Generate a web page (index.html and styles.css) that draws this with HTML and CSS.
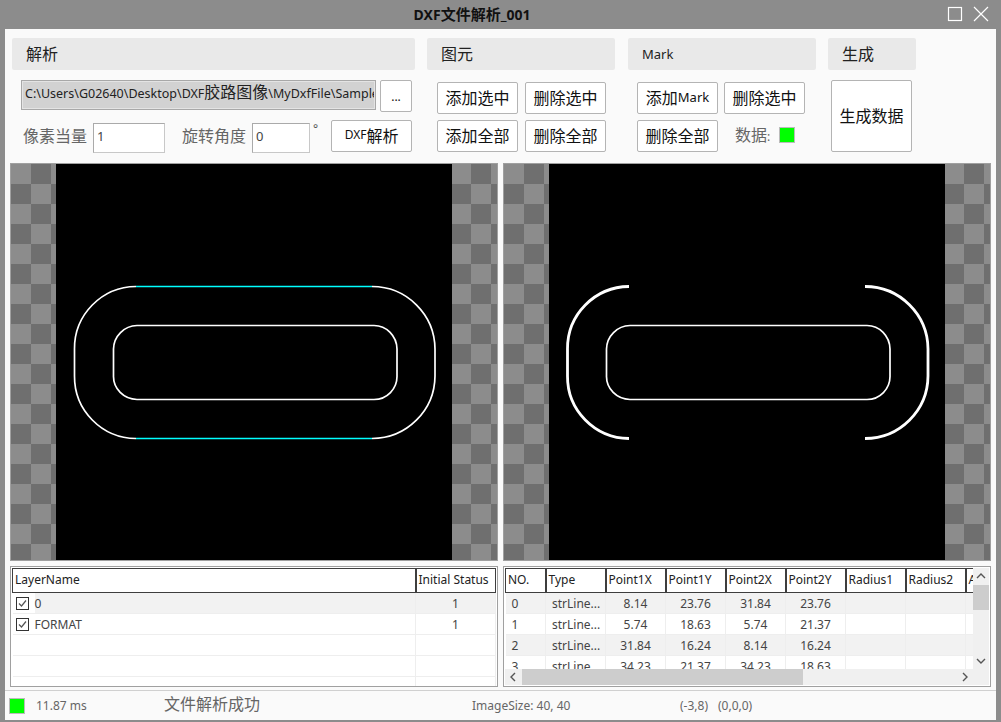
FILE: index.html
```html
<!DOCTYPE html>
<html lang="en">
<head>
    <meta charset="UTF-8">
    <title>DXF文件解析_001</title>
    <link rel="stylesheet" href="styles.css">
</head>
<body>
    <div class="window">
        <div class="titlebar">
            <span class="title">DXF<span class="title-cjk">文件解析</span>_001</span>
            <div class="controls">
                <svg width="16" height="16" viewBox="0 0 16 16"><rect x="1.5" y="1.5" width="13" height="13" class="ctl"/></svg>
                <svg width="16" height="16" viewBox="0 0 16 16"><path d="M1 1L15 15M15 1L1 15" class="ctl"/></svg>
            </div>
        </div>

        <div class="client">
            <div class="toolbar">
                <section class="group group-parse">
                    <h3><span class="cjk">解析</span></h3>
                    <div class="path-row">
                        <div class="path-field"><div class="path-text">C:\Users\G02640\Desktop\DXF<span class="cjk">胶路图像</span>\MyDxfFile\Sample</div></div>
                        <button class="btn btn-dots">...</button>
                    </div>
                    <div class="param-row">
                        <label class="label"><span class="cjk">像素当量</span></label>
                        <div class="input input-scale">1</div>
                        <label class="label label-angle"><span class="cjk">旋转角度</span></label>
                        <div class="input input-angle">0</div>
                        <span class="degree">°</span>
                        <button class="btn btn-parse">DXF<span class="cjk">解析</span></button>
                    </div>
                </section>

                <section class="group group-element">
                    <h3><span class="cjk">图元</span></h3>
                    <div class="btn-grid">
                        <button class="btn"><span class="cjk">添加选中</span></button>
                        <button class="btn"><span class="cjk">删除选中</span></button>
                        <button class="btn"><span class="cjk">添加全部</span></button>
                        <button class="btn"><span class="cjk">删除全部</span></button>
                    </div>
                </section>

                <section class="group group-mark">
                    <h3>Mark</h3>
                    <div class="btn-grid">
                        <button class="btn btn-mark"><span class="cjk">添加</span>Mark</button>
                        <button class="btn"><span class="cjk">删除选中</span></button>
                        <button class="btn"><span class="cjk">删除全部</span></button>
                        <div class="data-flag">
                            <span class="label"><span class="cjk">数据</span>:</span>
                            <span class="swatch"></span>
                        </div>
                    </div>
                </section>

                <section class="group group-make">
                    <h3><span class="cjk">生成</span></h3>
                    <button class="btn btn-make"><span class="cjk">生成数据</span></button>
                </section>
            </div>

            <div class="views">
                <div class="view">
                    <svg class="drawing" width="396" height="396" viewBox="0 0 396 396">
                        <path class="line" d="M80 122.500A62 62 0 0 0 18.500 185V212A62 62 0 0 0 80 274.500"/>
                        <path class="line" d="M316 122.500A63 63 0 0 1 379 185V212A63 63 0 0 1 316 274.500"/>
                        <path class="line" d="M81 161.500H318A23 24 0 0 1 341 185V212A23 23 0 0 1 318 235.500H81A24 23 0 0 1 57.500 212V185A24 24 0 0 1 81 161.500Z"/>
                        <path class="sel" d="M80 122.500H316M80 274.500H316"/>
                    </svg>
                </div>
                <div class="view">
                    <svg class="drawing" width="396" height="396" viewBox="0 0 396 396">
                        <path class="thick" d="M80 122.500A62 62 0 0 0 18.500 185V212A62 62 0 0 0 80 274.500"/>
                        <path class="thick" d="M316 122.500A63 63 0 0 1 379 185V212A63 63 0 0 1 316 274.500"/>
                        <path class="line" d="M81 161.500H318A23 24 0 0 1 341 185V212A23 23 0 0 1 318 235.500H81A24 23 0 0 1 57.500 212V185A24 24 0 0 1 81 161.500Z"/>
                    </svg>
                </div>
            </div>

            <div class="tables">
                <div class="frame">
                    <table class="grid layers">
                        <thead>
                            <tr><th class="col-name">LayerName</th><th class="col-init">Initial Status</th></tr>
                        </thead>
                        <tbody>
                            <tr>
                                <td>
                                    <div class="layer-cell">
                                        <span class="check-wrap">
                                            <svg width="13" height="13" viewBox="0 0 13 13"><rect x="0.500" y="0.500" width="12" height="12" class="box"/><path d="M3 6.500L5.500 9L10 3.500" class="tick"/></svg>
                                        </span>0
                                    </div>
                                </td>
                                <td>1</td>
                            </tr>
                            <tr>
                                <td>
                                    <div class="layer-cell">
                                        <span class="check-wrap">
                                            <svg width="13" height="13" viewBox="0 0 13 13"><rect x="0.500" y="0.500" width="12" height="12" class="box"/><path d="M3 6.500L5.500 9L10 3.500" class="tick"/></svg>
                                        </span>FORMAT
                                    </div>
                                </td>
                                <td>1</td>
                            </tr>
                            <tr><td></td><td></td></tr>
                            <tr><td></td><td></td></tr>
                            <tr><td></td><td></td></tr>
                        </tbody>
                    </table>
                </div>

                <div class="frame frame-scroll">
                    <div class="scroll-view">
                        <table class="grid entities">
                            <thead>
                                <tr>
                                    <th class="col-no">NO.</th><th>Type</th><th>Point1X</th><th>Point1Y</th><th>Point2X</th><th>Point2Y</th><th>Radius1</th><th>Radius2</th><th>Angle</th>
                                </tr>
                            </thead>
                            <tbody>
                                <tr><td class="no">0</td><td class="type">strLine...</td><td>8.14</td><td>23.76</td><td>31.84</td><td>23.76</td><td></td><td></td><td></td></tr>
                                <tr><td class="no">1</td><td class="type">strLine...</td><td>5.74</td><td>18.63</td><td>5.74</td><td>21.37</td><td></td><td></td><td></td></tr>
                                <tr><td class="no">2</td><td class="type">strLine...</td><td>31.84</td><td>16.24</td><td>8.14</td><td>16.24</td><td></td><td></td><td></td></tr>
                                <tr><td class="no">3</td><td class="type">strLine...</td><td>34.23</td><td>21.37</td><td>34.23</td><td>18.63</td><td></td><td></td><td></td></tr>
                            </tbody>
                        </table>
                    </div>
                    <div class="vbar">
                        <svg width="16" height="16" viewBox="0 0 16 16"><path d="M4 10L8 6L12 10" class="arrow"/></svg>
                        <div class="vtrack"><div class="vthumb"></div></div>
                        <svg width="16" height="16" viewBox="0 0 16 16"><path d="M4 6L8 10L12 6" class="arrow"/></svg>
                    </div>
                    <div class="hbar">
                        <svg width="16" height="16" viewBox="0 0 16 16"><path d="M10 4L6 8L10 12" class="arrow"/></svg>
                        <div class="htrack"><div class="hthumb"></div></div>
                        <svg width="16" height="16" viewBox="0 0 16 16"><path d="M6 4L10 8L6 12" class="arrow"/></svg>
                    </div>
                    <div class="corner"></div>
                </div>
            </div>

            <div class="statusbar">
                <span class="swatch swatch-status"></span>
                <span class="time">11.87 ms</span>
                <span class="message"><span class="cjk">文件解析成功</span></span>
                <span class="size">ImageSize: 40, 40</span>
                <span class="pos">(-3,8)</span>
                <span class="rgb">(0,0,0)</span>
            </div>
        </div>
    </div>
</body>
</html>
```

FILE: styles.css
```css
* {
    box-sizing: border-box;
}
html, body {
    margin: 0;
    padding: 0;
}
body {
    width: 1001px;
    height: 722px;
    overflow: hidden;
    background-color: #8c8c8c;
    font-family: "Noto Sans", "Noto Sans CJK SC", sans-serif;
    font-size: 12px;
    color: #333;
}
.cjk {
    font-family: "Noto Sans CJK SC", sans-serif;
    font-size: 16px;
}
.window {
    width: 1001px;
    height: 722px;
    display: flex;
    flex-direction: column;
    padding: 0 5px 5px;
}

/* title bar */
.titlebar {
    height: 29px;
    flex: none;
    position: relative;
    display: flex;
    align-items: center;
    justify-content: center;
    padding: 0 57px 2px 0;
}
.title {
    font-size: 14px;
    font-weight: bold;
    color: #111;
}
.title-cjk {
    font-family: "Noto Sans CJK SC", sans-serif;
    font-size: 15px;
}
.controls {
    position: absolute;
    right: 7px;
    top: 6px;
    display: flex;
    gap: 10px;
}
.ctl {
    fill: none;
    stroke: #fff;
    stroke-width: 1.2;
}

.client {
    flex: 1;
    display: flex;
    flex-direction: column;
    background-color: #fafafa;
}

/* top tool groups */
.toolbar {
    height: 134px;
    flex: none;
    display: flex;
    padding: 9px 0 0 7px;
}
.group h3 {
    height: 32px;
    margin: 0;
    padding: 0 0 3px 14px;
    display: flex;
    align-items: center;
    background-color: #e9e9e9;
    border-radius: 2px;
    font-weight: normal;
    font-size: 13px;
    color: #222;
}
.group-mark h3 {
    padding-bottom: 0;
}
.group-parse {
    width: 403px;
    margin-right: 12px;
}
.group-element {
    width: 188px;
    margin-right: 13px;
}
.group-mark {
    width: 188px;
    margin-right: 12px;
}
.group-make {
    width: 88px;
}
.btn {
    width: 81px;
    height: 32px;
    padding: 0 0 3px;
    background-color: #fff;
    border: 1px solid #b4b4b4;
    border-radius: 2px;
    font-family: inherit;
    font-size: 12px;
    color: #111;
    display: inline-flex;
    align-items: center;
    justify-content: center;
}
.btn-mark {
    font-size: 13px;
    padding-bottom: 2px;
}
.btn-grid {
    display: grid;
    grid-template-columns: 81px 81px;
    grid-auto-rows: 32px;
    column-gap: 7px;
    row-gap: 6px;
    padding: 12px 0 0 10px;
}
.group-mark .btn-grid {
    column-gap: 6px;
    padding-left: 9px;
}
.btn-make {
    height: 72px;
    margin: 10px 0 0 3px;
}
.path-row {
    display: flex;
    gap: 4px;
    padding: 10px 0 0 9px;
}
.path-field {
    width: 355px;
    height: 30px;
    padding: 0 1px 0 3px;
    background-color: #d2d2d2;
    background-clip: padding-box;
    border: 1px solid #a8a8a8;
    outline: 1px solid #e4e4e4;
    outline-offset: -2px;
    font-size: 12.5px;
    line-height: 20px;
    color: #222;
}
.path-text {
    white-space: nowrap;
    overflow: hidden;
}
.btn-dots {
    width: 32px;
    margin: 0;
    padding: 0;
}
.param-row {
    display: flex;
    align-items: flex-start;
    padding: 8px 0 0 11px;
}
.label {
    color: #666;
    line-height: 30px;
}
.input {
    height: 30px;
    margin-top: 3px;
    padding-left: 3px;
    background-color: #fff;
    border: 1px solid #c8c8c8;
    border-top-color: #aaa;
    border-left-color: #aaa;
    font-size: 13px;
    line-height: 24px;
    color: #444;
}
.input-scale {
    width: 72px;
    margin-left: 6px;
}
.label-angle {
    margin-left: 17px;
}
.input-angle {
    width: 58px;
    margin-left: 6px;
}
.degree {
    width: 21px;
    padding-left: 3px;
    line-height: 18px;
    color: #555;
}
.data-flag {
    display: flex;
    align-items: center;
    padding: 0 0 2px 11px;
}
.data-flag .label {
    width: 44px;
    white-space: nowrap;
}
.swatch {
    display: block;
    width: 16px;
    height: 16px;
    background-color: #00ff00;
    border: 1px solid #bbb;
    flex: none;
}

/* drawing views */
.views {
    display: flex;
    gap: 5px;
    padding: 0 5px;
}
.view {
    width: 488px;
    height: 398px;
    border: 1px solid #a0a0a0;
    display: flex;
    justify-content: center;
    background-color: #8c8c8c;
    background-image: conic-gradient(#6f6f6f 25%, #8c8c8c 0 50%, #6f6f6f 0 75%, #8c8c8c 0);
    background-size: 40px 40px;
}
.drawing {
    display: block;
    background-color: #000;
}
.line, .thick, .sel {
    fill: none;
}
.line {
    stroke: #fff;
    stroke-width: 1.7;
}
.thick {
    stroke: #fff;
    stroke-width: 2.8;
}
.sel {
    stroke: #00ffff;
    stroke-width: 1.7;
}

/* tables */
.tables {
    display: flex;
    gap: 5px;
    padding: 5px 5px 0;
}
.frame {
    width: 488px;
    height: 121px;
    padding: 1px;
    border: 1px solid #a0a0a0;
    background-color: #fff;
    overflow: hidden;
}
.grid {
    border-collapse: collapse;
    table-layout: fixed;
    color: #444;
}
.grid th {
    height: 24px;
    padding: 0 2px 2px;
    background-color: #fff;
    border: 1px solid #3e3e3e;
    border-right-width: 2px;
    font-weight: normal;
    font-size: 12px;
    text-align: left;
    color: #222;
    white-space: nowrap;
    overflow: hidden;
}
.grid td {
    height: 21px;
    padding: 0;
    border-right: 1px solid #eee;
    border-bottom: 1px solid #eee;
    text-align: center;
    white-space: nowrap;
    overflow: hidden;
}
.grid tbody tr:nth-child(odd) td {
    background-color: #f2f2f2;
}
.grid tbody tr:nth-child(n+3) td {
    background-color: #fff;
}
.entities tbody tr:nth-child(3) td {
    background-color: #f2f2f2;
}
.layers {
    width: 483px;
}
.layers .col-name {
    width: 403px;
}
.layers .col-init {
    width: 80px;
    border-right-width: 1px;
}
.layer-cell {
    display: flex;
    align-items: center;
    height: 20px;
    text-align: left;
}
.check-wrap {
    display: flex;
    align-items: flex-start;
    width: 22px;
    height: 20px;
    padding: 4px 0 0 3px;
    background-color: #fff;
}
.check-wrap svg {
    display: block;
}
.box {
    fill: #fff;
    stroke: #333;
}
.tick {
    fill: none;
    stroke: #555;
    stroke-width: 1.2;
}

.frame-scroll {
    display: grid;
    grid-template-columns: 468px 16px;
    grid-template-rows: 101px 16px;
}
.scroll-view {
    overflow: hidden;
    background-color: #fff;
}
.entities {
    width: 520px;
}
.entities th {
    width: 60px;
}
.entities .col-no {
    width: 40px;
}
.entities .no {
    text-align: left;
    padding-left: 6px;
}
.entities .type {
    text-align: left;
    padding-left: 6px;
}
.vbar, .hbar, .corner {
    background-color: #f0f0f0;
}
.vbar {
    display: flex;
    flex-direction: column;
}
.vtrack {
    flex: 1;
    padding-top: 1px;
}
.vthumb {
    height: 25px;
    background-color: #cdcdcd;
}
.hbar {
    display: flex;
}
.htrack {
    flex: 1;
}
.hthumb {
    width: 281px;
    height: 16px;
    margin-left: 1px;
    background-color: #cdcdcd;
}
.arrow {
    fill: none;
    stroke: #555;
    stroke-width: 1.4;
}

/* status bar */
.statusbar {
    flex: 1;
    margin-top: 3px;
    border-top: 1px solid #d0d0d0;
    display: flex;
    align-items: center;
    padding-left: 4px;
    color: #666;
}
.swatch-status {
    width: 16px;
    height: 16px;
}
.time {
    margin-left: 11px;
    width: 128px;
}
.message {
    width: 308px;
    padding-bottom: 5px;
}
.size {
    width: 208px;
}
.pos {
    width: 38px;
}
```
